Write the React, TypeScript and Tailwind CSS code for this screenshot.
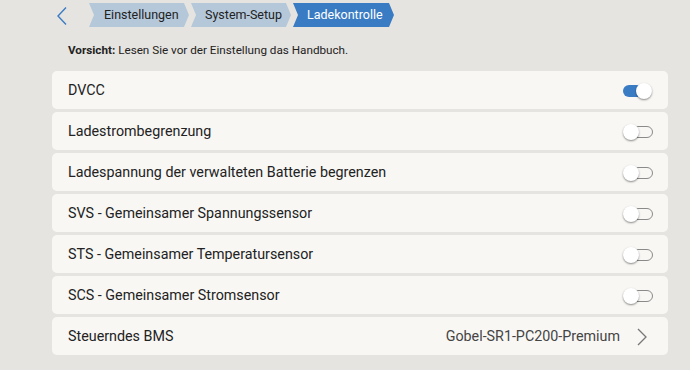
import React from "react";

const rows = [
  { label: "DVCC", on: true },
  { label: "Ladestrombegrenzung", on: false },
  { label: "Ladespannung der verwalteten Batterie begrenzen", on: false },
  { label: "SVS - Gemeinsamer Spannungssensor", on: false },
  { label: "STS - Gemeinsamer Temperatursensor", on: false },
  { label: "SCS - Gemeinsamer Stromsensor", on: false },
];

const crumbShape = {
  clipPath:
    "polygon(0 0, calc(100% - 5px) 0, 100% 50%, calc(100% - 5px) 100%, 0 100%, 5px 50%)",
};

function Toggle({ on }: { on: boolean }) {
  return (
    <div className="relative w-[30px] h-[16px]">
      {on ? (
        <div className="absolute left-0 top-[2px] w-[28px] h-[12px] rounded-full bg-[#3a7cc4]" />
      ) : (
        <div className="absolute left-[1px] top-[2px] w-[29px] h-[12px] rounded-full border border-[#8a8a8a]" />
      )}
      <div
        className={`absolute top-0 w-[16px] h-[16px] rounded-full bg-white shadow-[0_1px_2px_rgba(0,0,0,0.45)] ${
          on ? "left-[13px]" : "left-0"
        }`}
      />
    </div>
  );
}

export default function App() {
  return (
    <div
      className="w-[690px] h-[370px] bg-[#e6e4e0] overflow-hidden"
      style={{ fontFamily: "Roboto, 'Liberation Sans', sans-serif" }}
    >
      {/* Kopfzeile mit Breadcrumb */}
      <div className="flex items-center h-[30px] pl-[56px]">
        <svg width="12" height="20" viewBox="0 0 12 20" className="mt-[1px]">
          <path d="M10 1.5 L2 10 L10 18.5" fill="none" stroke="#3a7cc4" strokeWidth="1.4" />
        </svg>
        <div className="flex ml-[22px] gap-[2px] -translate-x-px">
          <div
            className="w-[100px] h-[24px] bg-[#b5c8da] flex items-center pl-[15px] text-[12.5px] text-[#222]"
            style={crumbShape}
          >
            Einstellungen
          </div>
          <div
            className="w-[100px] h-[24px] bg-[#b5c8da] flex items-center pl-[14px] text-[12.5px] text-[#222]"
            style={crumbShape}
          >
            System-Setup
          </div>
          <div
            className="w-[101px] h-[24px] bg-[#3a7cc4] flex items-center pl-[14px] text-[12.5px] text-white"
            style={crumbShape}
          >
            Ladekontrolle
          </div>
        </div>
      </div>

      {/* Hinweis */}
      <div className="pl-[68px] pt-[13px] h-[41px] text-[11.7px] text-[#222] leading-[14px]">
        <span className="font-bold">Vorsicht:</span> Lesen Sie vor der Einstellung das Handbuch.
      </div>

      {/* Einstellungen */}
      <div className="flex flex-col gap-[3px] ml-[52px] w-[616px]">
        {rows.map((row) => (
          <div
            key={row.label}
            className="h-[38px] rounded-[5px] bg-[#f8f7f4] flex items-center justify-between pl-[16px] pr-[15px] pt-px text-[14.3px] text-[#222]"
          >
            <span>{row.label}</span>
            <Toggle on={row.on} />
          </div>
        ))}
        <div className="h-[38px] rounded-[5px] bg-[#f8f7f4] flex items-center pl-[16px] pr-[20px] pt-px text-[14.3px] text-[#222]">
          <span className="flex-1">Steuerndes BMS</span>
          <span className="text-[#444]">Gobel-SR1-PC200-Premium</span>
          <svg width="12" height="18" viewBox="0 0 12 18" className="ml-[16px]">
            <path d="M2 1 L10 9 L2 17" fill="none" stroke="#777" strokeWidth="1.3" />
          </svg>
        </div>
      </div>
    </div>
  );
}
